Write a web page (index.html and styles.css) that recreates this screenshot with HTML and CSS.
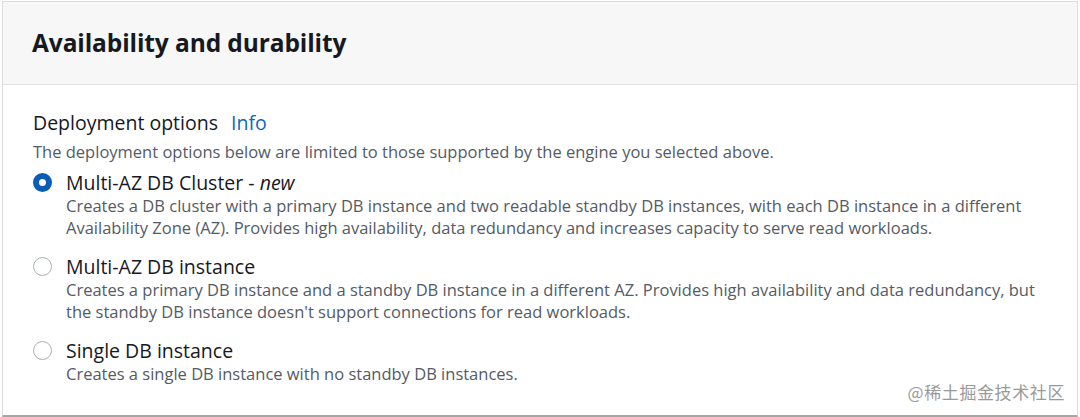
FILE: index.html
```html
<!DOCTYPE html>
<html lang="en">
<head>
<meta charset="utf-8">
<title>Availability and durability</title>
<link rel="stylesheet" href="styles.css">
</head>
<body>
<div class="panel">
  <div class="panel-header">
    <h2 class="panel-title">Availability and durability</h2>
  </div>
  <div class="panel-body">
    <div class="field-label">Deployment options <a class="info-link" href="#">Info</a></div>
    <div class="field-desc">The deployment options below are limited to those supported by the engine you selected above.</div>
    <div class="options">
      <div class="option">
        <span class="radio radio-checked"></span>
        <div class="option-text">
          <div class="option-label">Multi-AZ DB Cluster - <em>new</em></div>
          <div class="option-desc">Creates a DB cluster with a primary DB instance and two readable standby DB instances, with each DB instance in a different Availability Zone (AZ). Provides high availability, data redundancy and increases capacity to serve read workloads.</div>
        </div>
      </div>
      <div class="option">
        <span class="radio"></span>
        <div class="option-text">
          <div class="option-label">Multi-AZ DB instance</div>
          <div class="option-desc">Creates a primary DB instance and a standby DB instance in a different AZ. Provides high availability and data redundancy, but the standby DB instance doesn't support connections for read workloads.</div>
        </div>
      </div>
      <div class="option">
        <span class="radio"></span>
        <div class="option-text">
          <div class="option-label">Single DB instance</div>
          <div class="option-desc">Creates a single DB instance with no standby DB instances.</div>
        </div>
      </div>
    </div>
  </div>
  <div class="watermark">@稀土掘金技术社区</div>
</div>
</body>
</html>
```
FILE: styles.css
```css
html, body {
  margin: 0;
  padding: 0;
  background: #ffffff;
}
body {
  padding: 1px 2px 0 2px;
  font-family: "Open Sans", "Noto Sans CJK SC", sans-serif;
  color: #16191f;
}
.panel {
  position: relative;
  height: 416px;
  box-sizing: border-box;
  border: 1px solid #dcdcdc;
  border-bottom: 2px solid #a6a6a6;
  background: #ffffff;
}
.panel-header {
  height: 83px;
  box-sizing: border-box;
  background: #f7f7f7;
  border-bottom: 1px solid #e2e2e2;
  display: flex;
  align-items: center;
  padding-left: 29px;
}
.panel-title {
  margin: 0;
  font-size: 24.5px;
  font-weight: 700;
  line-height: 32px;
  letter-spacing: -0.1px;
  color: #16191f;
}
.panel-body {
  padding: 27px 30px 0 30px;
}
.field-label {
  font-size: 19.5px;
  line-height: 22px;
  color: #16191f;
}
.info-link {
  color: #1166bb;
  text-decoration: none;
  margin-left: 8px;
}
.field-desc {
  margin-top: 7px;
  font-size: 16.5px;
  line-height: 22px;
  color: #545b64;
}
.options {
  margin-top: 9px;
  display: flex;
  flex-direction: column;
  gap: 17px;
}
.option {
  display: flex;
  align-items: flex-start;
  gap: 14px;
}
.radio {
  flex: none;
  width: 19px;
  height: 19px;
  margin-top: 1px;
  box-sizing: border-box;
  border-radius: 50%;
  border: 1.5px solid #a9b0b3;
  background: #ffffff;
}
.radio-checked {
  border: 6px solid #0b5cb5;
}
.option-label {
  font-size: 19.5px;
  line-height: 22px;
  color: #16191f;
}
.option-desc {
  margin-top: 1px;
  font-size: 16.5px;
  line-height: 22px;
  color: #545b64;
}
.watermark {
  position: absolute;
  right: 12px;
  bottom: 13px;
  font-size: 17px;
  line-height: 20px;
  color: #9a9a9a;
  font-family: "Noto Sans CJK SC", sans-serif;
  letter-spacing: 0.6px;
}
```
